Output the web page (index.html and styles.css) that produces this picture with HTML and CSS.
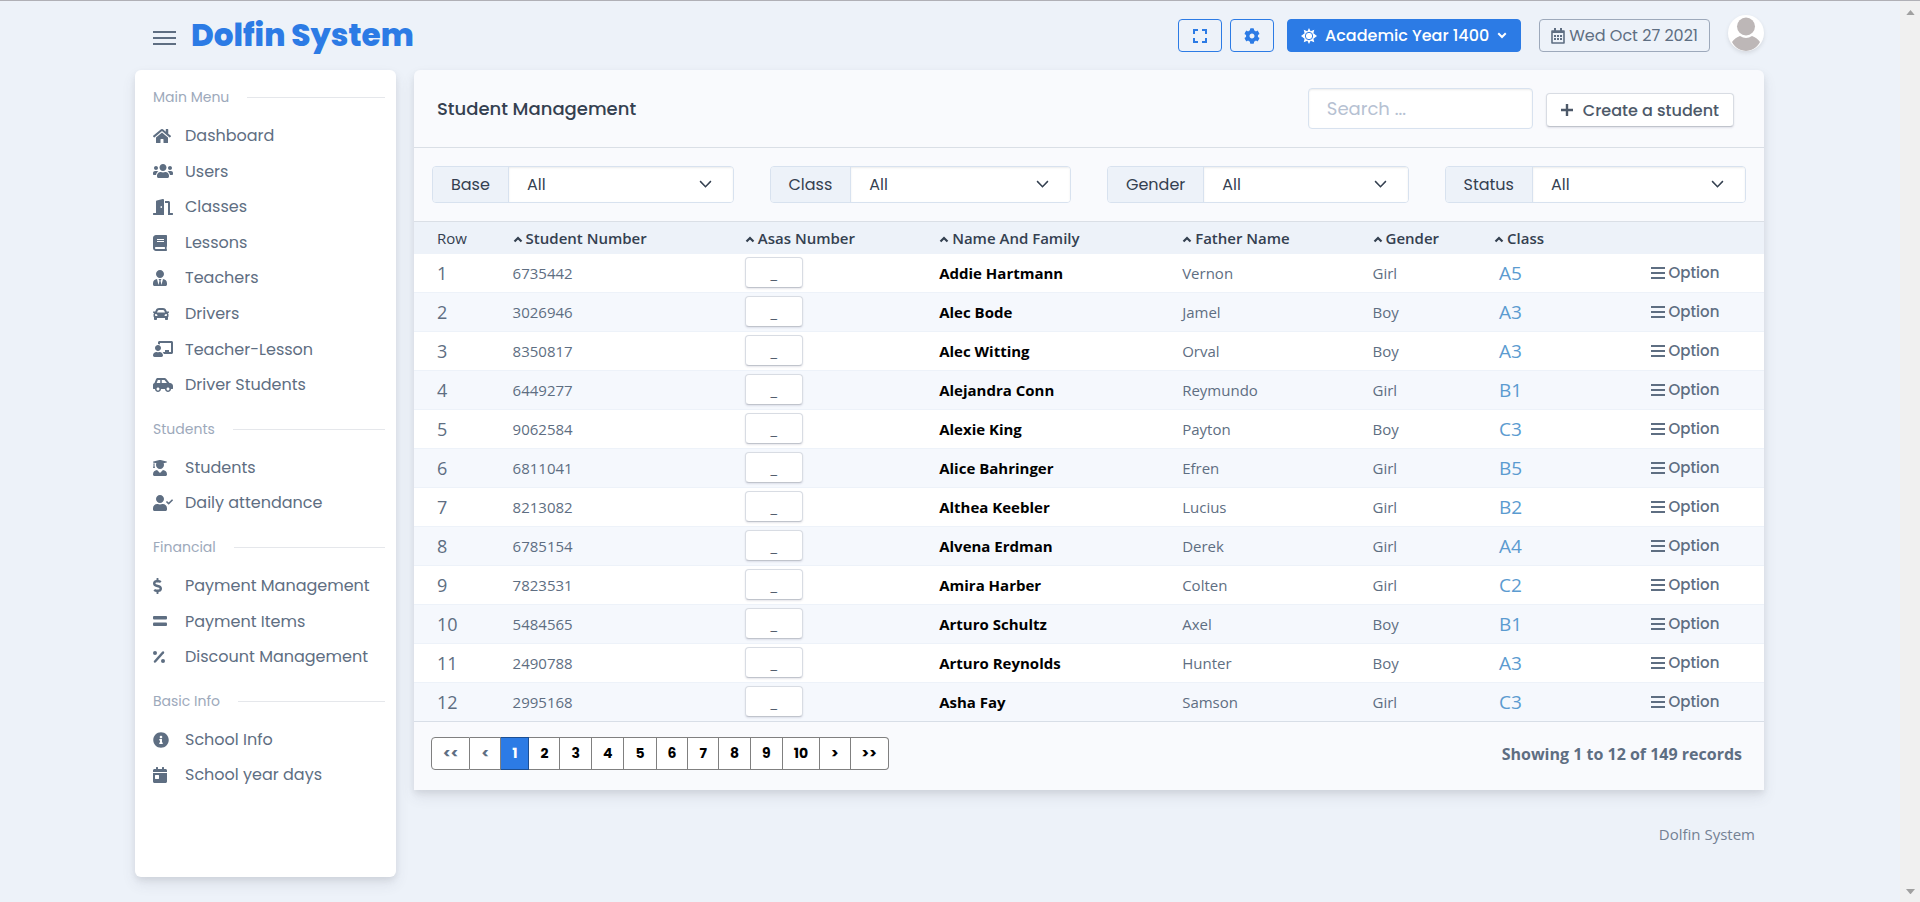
FILE: index.html
```
<!DOCTYPE html>
<html lang="en">
<head>
    <meta charset="UTF-8">
    <meta name="viewport" content="width=device-width, initial-scale=1.0">
    <title>Dolfin System</title>
    <link rel="stylesheet" href="styles.css">
</head>
<body>
    <svg class="sprite" aria-hidden="true">
        <symbol id="bars" viewBox="0 0 14 14"><path d="M0 1h14v2H0zM0 6h14v2H0zM0 11h14v2H0z"/></symbol>
        <symbol id="up" viewBox="0 0 10 8"><path d="M1.500 6.500 5 3l3.500 3.500" fill="none" stroke="currentColor" stroke-width="2.200"/></symbol>
    </svg>
    <div class="page">
        <header class="topbar">
            <button class="burger" aria-label="Toggle menu"><span></span><span></span><span></span></button>
            <a class="brand" href="#">Dolfin System</a>
            <div class="tools">
                <button class="btn-outline" aria-label="Full screen">
                    <svg class="icon" viewBox="0 0 16 16"><path d="M2 6V2h4M10 2h4v4M14 10v4h-4M6 14H2v-4" fill="none" stroke="currentColor" stroke-width="2"/></svg>
                </button>
                <button class="btn-outline" aria-label="Settings">
                    <svg class="icon" viewBox="0 0 512 512"><path d="M487.400 315.700l-42.600-24.600c4.300-23.200 4.300-47 0-70.200l42.600-24.600c4.900-2.800 7.100-8.600 5.500-14-11.100-35.600-30-67.800-54.700-94.600-3.800-4.100-10-5.100-14.800-2.300L380.800 110c-17.900-15.400-38.500-27.300-60.800-35.100V25.800c0-5.600-3.900-10.500-9.400-11.700-36.700-8.200-74.300-7.800-109.200 0-5.500 1.200-9.400 6.100-9.400 11.700V75c-22.200 7.900-42.800 19.800-60.800 35.100L88.700 85.500c-4.900-2.800-11-1.900-14.800 2.300-24.700 26.700-43.600 58.900-54.700 94.600-1.700 5.400.6 11.200 5.500 14L67.300 221c-4.300 23.200-4.300 47 0 70.200l-42.600 24.600c-4.900 2.800-7.100 8.600-5.500 14 11.100 35.600 30 67.800 54.700 94.600 3.800 4.100 10 5.100 14.800 2.300l42.600-24.600c17.900 15.400 38.500 27.300 60.800 35.100v49.200c0 5.600 3.900 10.500 9.400 11.700 36.700 8.200 74.300 7.800 109.200 0 5.500-1.200 9.400-6.100 9.400-11.700v-49.200c22.200-7.900 42.800-19.800 60.800-35.100l42.600 24.600c4.900 2.800 11 1.900 14.800-2.300 24.700-26.700 43.600-58.900 54.700-94.600 1.500-5.500-.7-11.300-5.600-14.100zM256 336c-44.100 0-80-35.900-80-80s35.900-80 80-80 80 35.900 80 80-35.900 80-80 80z"/></svg>
                </button>
                <button class="btn-primary">
                    <svg class="sun" viewBox="0 0 16 16"><path d="M8 0l1.600 3.200 3.700-1.500-.9 3.500L16 8l-3.600 2.800.9 3.500-3.700-1.500L8 16l-1.600-3.200-3.700 1.500.9-3.500L0 8l3.600-2.800-.9-3.500 3.700 1.500z"/><circle cx="8" cy="8" r="3.700" fill="none" stroke="#2c7be5" stroke-width="1"/></svg>
                    Academic Year 1400
                    <svg class="caret" viewBox="0 0 12 8"><path d="M1.500 1.500 6 6l4.500-4.500" fill="none" stroke="currentColor" stroke-width="2.400"/></svg>
                </button>
                <button class="btn-date">
                    <svg class="icon" viewBox="0 0 14 16"><path d="M1 3h12v12H1z" fill="none" stroke="currentColor" stroke-width="1.600" stroke-linejoin="round"/><path d="M3 0h2v3H3zM9 0h2v3H9zM1 3h12v2H1zM3 7h2v2H3zM6 7h2v2H6zM9 7h2v2H9zM3 10h2v2H3zM6 10h2v2H6zM9 10h2v2H9z"/></svg>
                    Wed Oct 27 2021
                </button>
                <a class="avatar" href="#" aria-label="Profile">
                    <svg viewBox="0 0 36 36"><circle cx="18" cy="11.500" r="9"/><path d="M4 27c2-3 5-5 8-6 4 2.500 8 2.500 12 0 3 1 6 3 8 6-3 5.500-8 9-14 9S7 32.500 4 27z"/></svg>
                </a>
            </div>
        </header>

        <nav class="sidebar">
            <h2 class="menu-title">Main Menu</h2>
            <ul>
                <li><a href="#"><span class="pic"><svg class="icon" viewBox="0 0 576 512"><path d="M280.370 148.260L96 300.110V464a16 16 0 0 0 16 16l112.060-.29a16 16 0 0 0 15.920-16V368a16 16 0 0 1 16-16h64a16 16 0 0 1 16 16v95.640a16 16 0 0 0 16 16.050L464 480a16 16 0 0 0 16-16V300L295.670 148.260a12.190 12.190 0 0 0-15.300 0zM571.600 251.470L488 182.560V44.050a12 12 0 0 0-12-12h-56a12 12 0 0 0-12 12v72.610L318.470 43a48 48 0 0 0-61 0L4.340 251.470a12 12 0 0 0-1.600 16.900l25.500 31A12 12 0 0 0 45.150 301l235.220-193.740a12.190 12.190 0 0 1 15.300 0L530.900 301a12 12 0 0 0 16.900-1.600l25.500-31a12 12 0 0 0-1.700-16.930z"/></svg></span>Dashboard</a></li>
                <li><a href="#"><span class="pic"><svg class="icon" viewBox="0 0 640 512"><path d="M96 224c35.300 0 64-28.700 64-64s-28.700-64-64-64-64 28.700-64 64 28.700 64 64 64zm448 0c35.300 0 64-28.700 64-64s-28.700-64-64-64-64 28.700-64 64 28.700 64 64 64zm32 32h-64c-17.600 0-33.500 7.100-45.100 18.600 40.300 22.100 68.900 62 75.100 109.400h66c17.700 0 32-14.300 32-32v-32c0-35.300-28.700-64-64-64zm-256 0c61.900 0 112-50.100 112-112S381.900 32 320 32 208 82.100 208 144s50.100 112 112 112zm76.800 32h-8.300c-20.800 10-43.900 16-68.500 16s-47.600-6-68.500-16h-8.300C179.600 288 128 339.600 128 403.200V432c0 26.500 21.500 48 48 48h288c26.500 0 48-21.500 48-48v-28.800c0-63.600-51.600-115.200-115.200-115.200zm-223.700-13.400C161.500 263.100 145.600 256 128 256H64c-35.300 0-64 28.700-64 64v32c0 17.700 14.300 32 32 32h65.900c6.300-47.400 34.900-87.300 75.200-109.400z"/></svg></span>Users</a></li>
                <li><a href="#"><span class="pic"><svg class="icon" viewBox="0 0 640 512"><path d="M624 448h-80V113.450C544 86.190 522.470 64 496 64H384v64h96v384h144c8.840 0 16-7.160 16-16v-32c0-8.840-7.160-16-16-16zM312.240 1.010l-192 49.740C105.990 54.440 96 67.700 96 82.920V448H16c-8.840 0-16 7.160-16 16v32c0 8.840 7.160 16 16 16h336V33.180c0-21.580-19.560-37.410-39.760-32.170zM264 288c-13.250 0-24-14.330-24-32s10.750-32 24-32 24 14.330 24 32-10.750 32-24 32z"/></svg></span>Classes</a></li>
                <li><a href="#"><span class="pic"><svg class="icon" viewBox="0 0 448 512"><path d="M448 360V24c0-13.300-10.700-24-24-24H96C43 0 0 43 0 96v320c0 53 43 96 96 96h328c13.300 0 24-10.700 24-24v-16c0-7.500-3.500-14.300-8.900-18.700-4.200-15.400-4.200-59.300 0-74.700 5.400-4.300 8.900-11.100 8.900-18.600zM128 134c0-3.300 2.700-6 6-6h212c3.300 0 6 2.700 6 6v20c0 3.300-2.700 6-6 6H134c-3.300 0-6-2.700-6-6v-20zm0 64c0-3.300 2.700-6 6-6h212c3.300 0 6 2.700 6 6v20c0 3.300-2.700 6-6 6H134c-3.300 0-6-2.700-6-6v-20zm253.400 250H96c-17.700 0-32-14.300-32-32 0-17.600 14.400-32 32-32h285.400c-1.900 17.100-1.900 46.900 0 64z"/></svg></span>Lessons</a></li>
                <li><a href="#"><span class="pic"><svg class="icon" viewBox="0 0 448 512"><path d="M224 256c70.700 0 128-57.300 128-128S294.700 0 224 0 96 57.300 96 128s57.300 128 128 128zm95.800 32.600L272 480l-32-136 32-56h-96l32 56-32 136-47.800-191.400C56.900 292 0 350.300 0 422.400V464c0 26.500 21.500 48 48 48h352c26.500 0 48-21.500 48-48v-41.600c0-72.100-56.900-130.400-128.200-133.800z"/></svg></span>Teachers</a></li>
                <li><a href="#"><span class="pic"><svg class="icon" viewBox="0 0 512 512"><path d="M499.990 176h-59.870l-16.640-41.600C406.380 91.630 365.570 64 319.500 64h-127c-46.060 0-86.880 27.630-103.990 70.400L71.870 176H12.010C4.200 176-1.530 183.340.37 190.910l6 24C7.700 220.250 12.500 224 18.010 224h20.070C24.650 235.730 16 252.780 16 272v48c0 16.120 6.160 30.670 16 41.930V416c0 17.670 14.330 32 32 32h32c17.670 0 32-14.330 32-32v-32h256v32c0 17.670 14.330 32 32 32h32c17.670 0 32-14.330 32-32v-54.070c9.840-11.250 16-25.800 16-41.930v-48c0-19.220-8.650-36.270-22.070-48H494c5.510 0 10.310-3.750 11.640-9.090l6-24c1.890-7.570-3.840-14.910-11.650-14.910zm-352.060-17.830c7.290-18.220 24.940-30.170 44.570-30.170h127c19.630 0 37.280 11.950 44.570 30.170L384 208H128l19.930-49.830zM96 319.800c-19.200 0-32-12.760-32-31.900S76.800 256 96 256s48 28.710 48 47.850-28.800 15.950-48 15.950zm320 0c-19.200 0-48 3.190-48-15.950S396.800 256 416 256s32 12.760 32 31.900-12.800 31.900-32 31.900z"/></svg></span>Drivers</a></li>
                <li><a href="#"><span class="pic"><svg class="icon" viewBox="0 0 640 512"><path d="M208 352c-2.390 0-4.780.35-7.060 1.090C187.980 357.300 174.350 360 160 360c-14.350 0-27.980-2.700-40.950-6.910-2.280-.74-4.660-1.090-7.050-1.090C49.940 352-.33 402.480 0 464.620.14 490.880 21.730 512 48 512h224c26.270 0 47.860-21.120 48-47.380.33-62.140-49.940-112.620-112-112.620zm-48-32c53.020 0 96-42.980 96-96s-42.980-96-96-96-96 42.980-96 96 42.980 96 96 96zM592 0H208c-26.470 0-48 22.250-48 49.590V96c23.420 0 45.100 6.780 64 17.800V64h352v288h-64v-64H384v64h-76.240c19.100 16.690 33.120 38.730 39.690 64H592c26.470 0 48-22.250 48-49.590V49.590C640 22.250 618.470 0 592 0z"/></svg></span>Teacher-Lesson</a></li>
                <li><a href="#"><span class="pic"><svg class="icon" viewBox="0 0 640 512"><path d="M544 192h-16L419.220 56.020A64.025 64.025 0 0 0 369.240 32H155.330c-26.170 0-49.700 15.930-59.420 40.230L48 194.260C20.440 201.400 0 226.210 0 256v112c0 8.840 7.160 16 16 16h48c0 53.020 42.980 96 96 96s96-42.980 96-96h128c0 53.020 42.980 96 96 96s96-42.980 96-96h48c8.840 0 16-7.160 16-16v-80c0-53.020-42.980-96-96-96zM160 432c-26.470 0-48-21.530-48-48s21.530-48 48-48 48 21.530 48 48-21.530 48-48 48zm72-240H116.930l38.400-96H232v96zm48 0V96h89.240l76.800 96H280zm200 240c-26.470 0-48-21.530-48-48s21.530-48 48-48 48 21.530 48 48-21.530 48-48 48z"/></svg></span>Driver Students</a></li>
            </ul>
            <h2 class="menu-title">Students</h2>
            <ul>
                <li><a href="#"><span class="pic"><svg class="icon" viewBox="0 0 448 512"><path d="M319.400 320.600L224 416l-95.400-95.400C57.100 323.700 0 382.200 0 454.400v9.600c0 26.500 21.500 48 48 48h352c26.500 0 48-21.500 48-48v-9.600c0-72.200-57.100-130.700-128.600-133.800zM13.600 79.800l6.400 1.500v58.400c-7 4.200-12 11.500-12 20.300 0 8.400 4.600 15.400 11.100 19.700L3.500 242c-1.700 6.900 2.100 14 7.600 14h41.800c5.500 0 9.300-7.100 7.600-14l-15.600-62.300C51.400 175.400 56 168.400 56 160c0-8.800-5-16.100-12-20.300V87.100l66 15.900c-8.600 17.200-14 36.400-14 57 0 70.700 57.300 128 128 128s128-57.300 128-128c0-20.600-5.300-39.800-14-57l96.300-23.200c18.200-4.400 18.200-27.100 0-31.500l-190.400-46c-13-3.100-26.700-3.100-39.700 0L13.600 48.200c-18.100 4.400-18.100 27.200 0 31.600z"/></svg></span>Students</a></li>
                <li><a href="#"><span class="pic"><svg class="icon" viewBox="0 0 640 512"><path d="M224 256c70.700 0 128-57.300 128-128S294.700 0 224 0 96 57.300 96 128s57.300 128 128 128zm89.600 32h-16.700c-22.200 10.200-46.900 16-72.900 16s-50.600-5.800-72.900-16h-16.700C60.200 288 0 348.200 0 422.400V464c0 26.500 21.500 48 48 48h352c26.500 0 48-21.500 48-48v-41.600c0-74.200-60.200-134.400-134.400-134.400zM636.600 159.700l-19.100-19.400c-4.800-4.800-12.400-4.800-17.100-.1L500 239.800l-43.400-43.700c-4.700-4.700-12.400-4.800-17.100-.1l-19.500 19.300c-4.800 4.700-4.800 12.400-.1 17.100l71.400 71.900c4.700 4.800 12.400 4.800 17.100.1l128.100-127.600c4.800-4.700 4.800-12.400.1-17.100z"/></svg></span>Daily attendance</a></li>
            </ul>
            <h2 class="menu-title">Financial</h2>
            <ul>
                <li><a href="#"><span class="pic"><svg class="icon" viewBox="0 0 288 512"><path d="M209.200 233.400l-108-31.600C88.700 198.200 80 186.500 80 173.500c0-16.300 13.200-29.500 29.500-29.500h66.300c12.200 0 24.200 3.700 34.200 10.500 6.100 4.100 14.300 3.100 19.500-2l34.800-34c7.100-6.900 6.100-18.400-1.800-24.500C238 74.800 207.400 64.100 176 64V16c0-8.800-7.200-16-16-16h-32c-8.800 0-16 7.200-16 16v48h-2.500C45.800 64-5.400 118.700.5 183.600c4.200 46.100 39.400 83.600 83.800 96.600l102.500 30c12.500 3.700 21.200 15.300 21.200 28.300 0 16.300-13.200 29.500-29.500 29.500h-66.300C100 368 88 364.300 78 357.500c-6.100-4.100-14.300-3.100-19.500 2l-34.800 34c-7.100 6.900-6.100 18.400 1.800 24.500 24.500 19.200 55.100 29.900 86.500 30v48c0 8.800 7.200 16 16 16h32c8.800 0 16-7.200 16-16v-48.200c46.600-.9 90.300-28.600 105.700-72.700 21.500-61.600-14.600-124.800-72.500-141.700z"/></svg></span>Payment Management</a></li>
                <li><a href="#"><span class="pic"><svg class="icon" viewBox="0 0 14 16"><rect y="3" width="14" height="3.500" rx="1"/><rect y="9.500" width="14" height="3.500" rx="1"/></svg></span>Payment Items</a></li>
                <li><a href="#"><span class="pic"><svg class="icon" viewBox="0 0 12 16"><circle cx="2" cy="4" r="2"/><circle cx="10" cy="12" r="2"/><path d="M2 12.500 10 3.500" stroke="currentColor" stroke-width="2.500" stroke-linecap="round"/></svg></span>Discount Management</a></li>
            </ul>
            <h2 class="menu-title">Basic Info</h2>
            <ul>
                <li><a href="#"><span class="pic"><svg class="icon" viewBox="0 0 512 512"><path d="M256 8C119.043 8 8 119.083 8 256c0 136.997 111.043 248 248 248s248-111.003 248-248C504 119.083 392.957 8 256 8zm0 110c23.196 0 42 18.804 42 42s-18.804 42-42 42-42-18.804-42-42 18.804-42 42-42zm56 254c0 6.627-5.373 12-12 12h-88c-6.627 0-12-5.373-12-12v-24c0-6.627 5.373-12 12-12h12v-64h-12c-6.627 0-12-5.373-12-12v-24c0-6.627 5.373-12 12-12h64c6.627 0 12 5.373 12 12v100h12c6.627 0 12 5.373 12 12v24z"/></svg></span>School Info</a></li>
                <li><a href="#"><span class="pic"><svg class="icon" viewBox="0 0 448 512"><path d="M0 464c0 26.500 21.500 48 48 48h352c26.500 0 48-21.500 48-48V192H0v272zm64-192c0-8.800 7.200-16 16-16h96c8.800 0 16 7.200 16 16v96c0 8.800-7.200 16-16 16H80c-8.800 0-16-7.200-16-16v-96zM400 64h-48V16c0-8.800-7.200-16-16-16h-32c-8.800 0-16 7.200-16 16v48H160V16c0-8.800-7.200-16-16-16h-32c-8.800 0-16 7.200-16 16v48H48C21.500 64 0 85.500 0 112v48h448v-48c0-26.500-21.500-48-48-48z"/></svg></span>School year days</a></li>
            </ul>
        </nav>

        <main class="content">
            <section class="card">
                <div class="card-head">
                    <h1>Student Management</h1>
                    <input class="search" type="text" placeholder="Search ..." aria-label="Search">
                    <button class="btn-white create">
                        <svg class="plus" viewBox="0 0 12 12"><path d="M6 0v12M0 6h12" stroke="currentColor" stroke-width="2.400"/></svg>
                        Create a student
                    </button>
                </div>

                <div class="filters">
                    <div class="filter"><label for="base">Base</label><select id="base"><option>All</option></select></div>
                    <div class="filter"><label for="class">Class</label><select id="class"><option>All</option></select></div>
                    <div class="filter"><label for="gender">Gender</label><select id="gender"><option>All</option></select></div>
                    <div class="filter"><label for="status">Status</label><select id="status"><option>All</option></select></div>
                </div>

                <table class="students">
                    <colgroup>
                        <col class="c-row"><col class="c-number"><col class="c-asas"><col class="c-name"><col class="c-father"><col class="c-gender"><col class="c-class"><col>
                    </colgroup>
                    <thead>
                        <tr>
                            <th>Row</th>
                            <th><svg class="sort"><use href="#up"/></svg>Student Number</th>
                            <th><svg class="sort"><use href="#up"/></svg>Asas Number</th>
                            <th><svg class="sort"><use href="#up"/></svg>Name And Family</th>
                            <th><svg class="sort"><use href="#up"/></svg>Father Name</th>
                            <th><svg class="sort"><use href="#up"/></svg>Gender</th>
                            <th><svg class="sort"><use href="#up"/></svg>Class</th>
                            <th></th>
                        </tr>
                    </thead>
                    <tbody>
                        <tr><td class="row">1</td><td>6735442</td><td><button class="btn-white asas">_</button></td><td class="name">Addie Hartmann</td><td>Vernon</td><td>Girl</td><td class="class">A5</td><td><button class="option"><svg><use href="#bars"/></svg>Option</button></td></tr>
                        <tr><td class="row">2</td><td>3026946</td><td><button class="btn-white asas">_</button></td><td class="name">Alec Bode</td><td>Jamel</td><td>Boy</td><td class="class">A3</td><td><button class="option"><svg><use href="#bars"/></svg>Option</button></td></tr>
                        <tr><td class="row">3</td><td>8350817</td><td><button class="btn-white asas">_</button></td><td class="name">Alec Witting</td><td>Orval</td><td>Boy</td><td class="class">A3</td><td><button class="option"><svg><use href="#bars"/></svg>Option</button></td></tr>
                        <tr><td class="row">4</td><td>6449277</td><td><button class="btn-white asas">_</button></td><td class="name">Alejandra Conn</td><td>Reymundo</td><td>Girl</td><td class="class">B1</td><td><button class="option"><svg><use href="#bars"/></svg>Option</button></td></tr>
                        <tr><td class="row">5</td><td>9062584</td><td><button class="btn-white asas">_</button></td><td class="name">Alexie King</td><td>Payton</td><td>Boy</td><td class="class">C3</td><td><button class="option"><svg><use href="#bars"/></svg>Option</button></td></tr>
                        <tr><td class="row">6</td><td>6811041</td><td><button class="btn-white asas">_</button></td><td class="name">Alice Bahringer</td><td>Efren</td><td>Girl</td><td class="class">B5</td><td><button class="option"><svg><use href="#bars"/></svg>Option</button></td></tr>
                        <tr><td class="row">7</td><td>8213082</td><td><button class="btn-white asas">_</button></td><td class="name">Althea Keebler</td><td>Lucius</td><td>Girl</td><td class="class">B2</td><td><button class="option"><svg><use href="#bars"/></svg>Option</button></td></tr>
                        <tr><td class="row">8</td><td>6785154</td><td><button class="btn-white asas">_</button></td><td class="name">Alvena Erdman</td><td>Derek</td><td>Girl</td><td class="class">A4</td><td><button class="option"><svg><use href="#bars"/></svg>Option</button></td></tr>
                        <tr><td class="row">9</td><td>7823531</td><td><button class="btn-white asas">_</button></td><td class="name">Amira Harber</td><td>Colten</td><td>Girl</td><td class="class">C2</td><td><button class="option"><svg><use href="#bars"/></svg>Option</button></td></tr>
                        <tr><td class="row">10</td><td>5484565</td><td><button class="btn-white asas">_</button></td><td class="name">Arturo Schultz</td><td>Axel</td><td>Boy</td><td class="class">B1</td><td><button class="option"><svg><use href="#bars"/></svg>Option</button></td></tr>
                        <tr><td class="row">11</td><td>2490788</td><td><button class="btn-white asas">_</button></td><td class="name">Arturo Reynolds</td><td>Hunter</td><td>Boy</td><td class="class">A3</td><td><button class="option"><svg><use href="#bars"/></svg>Option</button></td></tr>
                        <tr><td class="row">12</td><td>2995168</td><td><button class="btn-white asas">_</button></td><td class="name">Asha Fay</td><td>Samson</td><td>Girl</td><td class="class">C3</td><td><button class="option"><svg><use href="#bars"/></svg>Option</button></td></tr>
                    </tbody>
                </table>

                <div class="card-foot">
                    <div class="pager">
                        <button disabled>&lt;&lt;</button><button disabled>&lt;</button><button class="active">1</button><button>2</button><button>3</button><button>4</button><button>5</button><button>6</button><button>7</button><button>8</button><button>9</button><button>10</button><button>&gt;</button><button>&gt;&gt;</button>
                    </div>
                    <p class="showing">Showing 1 to 12 of 149 records</p>
                </div>
            </section>
            <footer class="footer">Dolfin System</footer>
        </main>
    </div>
    <div class="scrollbar" aria-hidden="true">
        <svg viewBox="0 0 10 6"><path d="M0 6 5 0l5 6z"/></svg>
        <svg viewBox="0 0 10 6"><path d="M0 0l5 6 5-6z"/></svg>
    </div>
</body>
</html>
```

FILE: styles.css
```
* {
    box-sizing: border-box;
}
body {
    margin: 0;
    min-height: 100vh;
    display: flex;
    border-top: 1px solid #b0b0b6;
    background: #edf2f9;
    color: #5e6e82;
    font-family: "Open Sans", sans-serif;
    font-size: 15px;
}
h1, h2, p, ul {
    margin: 0;
    padding: 0;
}
ul {
    list-style: none;
}
a {
    color: inherit;
    text-decoration: none;
}
button, input, select {
    font: inherit;
    color: inherit;
}
button {
    cursor: pointer;
}
svg {
    fill: currentColor;
    flex: none;
}
.sprite {
    position: absolute;
    width: 0;
    height: 0;
}
.icon {
    height: 16px;
}
.page {
    flex: 1;
    display: grid;
    grid-template-columns: 261px minmax(0, 1fr);
    grid-template-rows: 69px 1fr;
    column-gap: 18px;
    padding: 0 136px 25px 135px;
}

/* top bar */
.topbar {
    grid-column: 1 / -1;
    display: flex;
    align-items: center;
    padding: 0 0 0 18px;
}
.burger {
    display: flex;
    flex-direction: column;
    gap: 4px;
    width: 23px;
    margin: 5px 15px 0 0;
    padding: 0;
    border: 0;
    background: none;
}
.burger span {
    height: 2px;
    width: 100%;
    background: #5e6e82;
}
.brand {
    color: #2c7be5;
    font-family: Poppins, Inter, sans-serif;
    font-size: 31px;
    font-weight: 800;
}
.tools {
    margin-left: auto;
    display: flex;
    align-items: center;
    font-family: Poppins, Inter, sans-serif;
    font-size: 16px;
    font-weight: 500;
}
.tools button {
    display: flex;
    align-items: center;
    height: 33px;
    padding: 0 13px;
    border: 1px solid #2c7be5;
    border-radius: 4px;
    background: none;
    color: #2c7be5;
}
.tools .btn-outline {
    margin-right: 8px;
}
.tools .btn-primary {
    gap: 8px;
    margin: 0 18px 0 5px;
    padding: 0 13px;
    background: #2c7be5;
    color: #fff;
}
.sun {
    width: 16px;
}
.caret {
    width: 10px;
}
.tools .btn-date {
    gap: 4px;
    padding: 0 11px;
    border-color: #9da9bb;
    color: #5e6e82;
    font-weight: 400;
}
.avatar {
    width: 36px;
    height: 36px;
    margin: -5px 0 0 18px;
    border-radius: 50%;
    overflow: hidden;
    background: #fff;
    color: #bdb7b7;
    box-shadow: 0 2px 4px rgba(0, 0, 0, 0.1);
}

/* sidebar */
.sidebar {
    padding: 17px 11px 20px 18px;
    border-radius: 6px;
    background: #fff;
    box-shadow: 0 7px 14px rgba(65, 69, 88, 0.1), 0 3px 6px rgba(0, 0, 0, 0.07);
    font-family: Poppins, Inter, sans-serif;
    font-size: 16px;
}
.menu-title {
    display: flex;
    align-items: center;
    gap: 18px;
    height: 21px;
    margin-bottom: 10px;
    color: #9da9bb;
    font-size: 14px;
    font-weight: 400;
}
.menu-title::after {
    content: "";
    flex: 1;
    height: 1px;
    background: #e5e7eb;
}
.sidebar ul {
    margin-bottom: 16px;
}
.sidebar li a {
    display: flex;
    align-items: center;
    padding: 5px 0;
    line-height: 1.6;
}
.pic {
    width: 32px;
    display: flex;
}

/* card */
.card {
    border-radius: 6px 6px 0 0;
    background: #f9fafd;
    box-shadow: 0 7px 14px rgba(65, 69, 88, 0.1), 0 3px 6px rgba(0, 0, 0, 0.07);
}
.card-head {
    display: flex;
    align-items: center;
    height: 78px;
    padding: 0 30px 0 23px;
    border-bottom: 1px solid #dadfe6;
    font-family: Poppins, Inter, sans-serif;
}
.card-head h1 {
    flex: 1;
    color: #344050;
    font-size: 18px;
    font-weight: 500;
}
.search {
    width: 225px;
    height: 41px;
    padding: 0 18px;
    border: 1px solid #d8e2ef;
    border-radius: 4px;
    background: #fff;
    box-shadow: inset 0 1px 2px rgba(0, 0, 0, 0.08);
    font-size: 18px;
}
.search::placeholder {
    color: #b6c1d2;
}
.btn-white {
    border: 1px solid #d8dce3;
    border-bottom-color: #c0c4cc;
    border-radius: 4px;
    background: #fff;
    box-shadow: 0 1px 2px rgba(43, 45, 80, 0.12);
    color: #4d5969;
}
.create {
    display: flex;
    align-items: center;
    gap: 10px;
    height: 34px;
    margin: 3px 0 0 13px;
    padding: 0 14px;
    font-size: 16px;
    font-weight: 500;
}
.plus {
    width: 12px;
}
.filters {
    display: grid;
    grid-template-columns: repeat(4, 1fr);
    gap: 36px;
    padding: 18px;
}
.filter {
    display: flex;
    height: 37px;
    border: 1px solid #d8e2ef;
    border-radius: 4px;
    overflow: hidden;
    color: #344050;
    font-family: Poppins, Inter, sans-serif;
    font-size: 16px;
}
.filter label {
    padding: 0 18px;
    border-right: 1px solid #d8e2ef;
    background: #edf2f9;
    line-height: 35px;
}
.filter select {
    flex: 1;
    appearance: none;
    padding: 0 18px;
    border: 0;
    background: #fff url("data:image/svg+xml,%3Csvg xmlns='http://www.w3.org/2000/svg' viewBox='0 0 12 8'%3E%3Cpath d='M1 1l5 5 5-5' fill='none' stroke='%23344050' stroke-width='1.400'/%3E%3C/svg%3E") no-repeat right 21px center / 13px;
    box-shadow: inset 0 1px 2px rgba(0, 0, 0, 0.08);
}

/* table */
.students {
    width: 100%;
    table-layout: fixed;
    border-collapse: separate;
    border-spacing: 0;
    border-top: 1px solid #dadfe6;
    background: #fff;
    text-align: left;
}
.c-row { width: 5.6%; }
.c-number { width: 17.2%; }
.c-asas { width: 14.4%; }
.c-name { width: 18%; }
.c-father { width: 14.1%; }
.c-gender { width: 9%; }
.c-class { width: 11.6%; }
.students th {
    height: 32px;
    padding: 0 0 0 23px;
    background: #edf2f9;
    color: #344050;
    font-weight: 600;
    white-space: nowrap;
}
.students th:first-child {
    font-weight: 500;
}
.students td {
    height: 39px;
    padding: 0 0 1px 23px;
    border-bottom: 1px solid #edf2f9;
}
.students tr:nth-child(even) td {
    background: #f5f8fd;
}
.students tr:last-child td {
    border-bottom-color: #d8dee7;
}
.sort {
    width: 10px;
    height: 8px;
    margin-right: 3px;
    vertical-align: 1px;
}
.students .row {
    font-size: 18px;
}
.students .name {
    color: #000;
    font-weight: 700;
}
.students .class {
    padding-left: 28px;
    color: #5b9bd0;
    font-size: 19px;
}
.asas {
    display: block;
    width: 58px;
    height: 31px;
    padding: 0;
}
.option {
    display: flex;
    align-items: center;
    gap: 4px;
    padding: 0;
    border: 0;
    background: none;
    font-family: Poppins, Inter, sans-serif;
    font-size: 15px;
    font-weight: 500;
}
.option svg {
    width: 14px;
    height: 14px;
}

/* card footer */
.card-foot {
    display: flex;
    align-items: center;
    justify-content: space-between;
    padding: 15px 22px 20px 17px;
}
.pager {
    display: flex;
    font-family: Poppins, Inter, sans-serif;
    font-size: 14px;
    font-weight: 700;
}
.pager button {
    height: 33px;
    padding: 0 11px;
    border: 1px solid #808080;
    border-left-width: 0;
    background: #fff;
    color: #000;
}
.pager button:first-child {
    border-left-width: 1px;
    border-radius: 4px 0 0 4px;
}
.pager button:last-child {
    border-radius: 0 4px 4px 0;
}
.pager button:disabled {
    color: #5e6e82;
}
.pager .active {
    border-color: #1c4f93;
    background: #2c7be5;
    color: #fff;
}
.showing {
    font-size: 16px;
    font-weight: 700;
}
.footer {
    padding: 34px 9px 0;
    color: #748194;
    text-align: right;
}

/* scroll track */
.scrollbar {
    width: 20px;
    display: flex;
    flex-direction: column;
    align-items: center;
    justify-content: space-between;
    padding: 9px 0 8px;
    background: #f0f0f0;
    color: #a0a0a0;
}
.scrollbar svg {
    width: 9px;
}
```
